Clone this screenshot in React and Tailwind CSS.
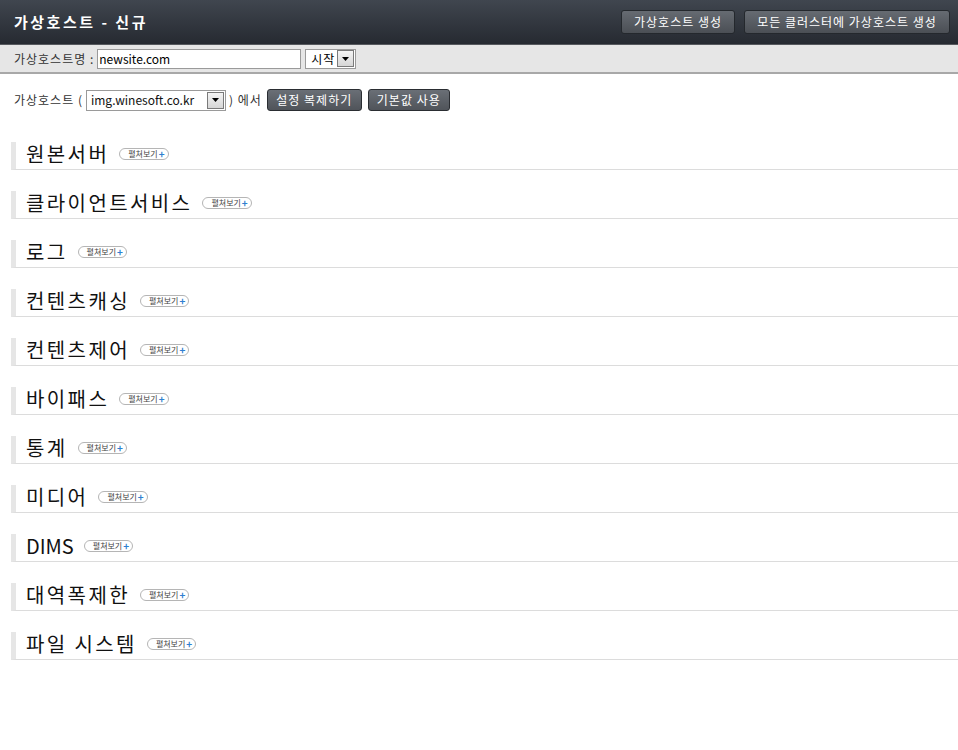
import React from "react";

const sections = [
  "원본서버",
  "클라이언트서비스",
  "로그",
  "컨텐츠캐싱",
  "컨텐츠제어",
  "바이패스",
  "통계",
  "미디어",
  "DIMS",
  "대역폭제한",
  "파일 시스템",
];

function Arrow() {
  return (
    <span className="flex h-[17px] w-[17px] items-center justify-center border border-[#7a7a7a] bg-gradient-to-b from-[#f4f4f4] to-[#d6d6d6]">
      <svg width="7" height="4" viewBox="0 0 7 4">
        <path d="M0 0h7L3.5 4z" fill="#000" />
      </svg>
    </span>
  );
}

function Badge() {
  return (
    <span className="ml-[10px] inline-flex h-[12px] items-center rounded-full border border-[#b5b5b5] bg-white pl-[8px] pr-[3px] text-[8px] leading-none tracking-[0px] text-[#444]">
      펼쳐보기<span className="ml-[1px] text-[10px] font-bold text-[#2f7fd0]">+</span>
    </span>
  );
}

export default function App() {
  return (
    <div
      className="min-h-[750px] w-[958px] bg-white text-[12px] text-[#333]"
      style={{ fontFamily: '"Noto Sans CJK KR", "Liberation Sans", sans-serif' }}
    >
      <div className="flex h-[45px] items-center justify-between border-b border-[#56595e] bg-gradient-to-b from-[#40464f] to-[#262a31] pl-[14px] pr-[8px]">
        <div className="text-[15px] font-bold tracking-[2.5px] text-white">가상호스트 - 신규</div>
        <div className="flex gap-[9px]">
          <button className="h-[24px] w-[114px] rounded-[3px] border border-[#24282d] bg-gradient-to-b from-[#666b72] to-[#4b4f55] text-[12px] tracking-[1px] text-white">
            가상호스트 생성
          </button>
          <button className="h-[24px] w-[206px] rounded-[3px] border border-[#24282d] bg-gradient-to-b from-[#666b72] to-[#4b4f55] text-[12px] tracking-[1px] text-white">
            모든 클러스터에 가상호스트 생성
          </button>
        </div>
      </div>

      <div className="flex h-[29px] items-center border-b-2 border-[#a8a8a8] bg-[#e6e6e6] pl-[14px]">
        <span className="text-[12px] tracking-[1px] text-[#333]">가상호스트명 :</span>
        <div className="ml-[3px] flex h-[20px] w-[204px] items-center border border-[#9a9a9a] bg-white pl-[1px] text-[12px] text-black">
          newsite.com
        </div>
        <div className="ml-[4px] flex h-[20px] w-[51px] items-center justify-between border border-[#9a9a9a] bg-white pl-[5px] pr-[1px] text-[12px] tracking-[1px] text-black">
          시작
          <Arrow />
        </div>
      </div>

      <div className="mt-[15px] flex items-center pl-[14px]">
        <span className="text-[12px] tracking-[1px] text-[#333]">가상호스트 (</span>
        <div className="ml-[3px] flex h-[21px] w-[140px] items-center justify-between border border-[#9a9a9a] bg-white pl-[4px] pr-[1px] text-[12px] text-[#111]">
          img.winesoft.co.kr
          <Arrow />
        </div>
        <span className="ml-[3px] text-[12px] tracking-[1px] text-[#333]">) 에서</span>
        <button className="ml-[5px] h-[22px] w-[95px] rounded-[3px] border border-[#2a2d32] bg-gradient-to-b from-[#6a6f76] to-[#50545a] text-[12px] tracking-[1px] text-white">
          설정 복제하기
        </button>
        <button className="ml-[6px] h-[22px] w-[82px] rounded-[3px] border border-[#2a2d32] bg-gradient-to-b from-[#6a6f76] to-[#50545a] text-[12px] tracking-[1px] text-white">
          기본값 사용
        </button>
      </div>

      <div className="mt-[31px] flex flex-col gap-[21px] pl-[11px]">
        {sections.map((s) => (
          <div
            key={s}
            className="flex h-[28px] items-center border-b border-l-[5px] border-b-[#dcdcdc] border-l-[#e6e6e6] pb-[3px] pl-[10px]"
          >
            <span
              className={
                s === "DIMS"
                  ? "text-[20px] leading-none text-[#111]"
                  : "text-[20px] leading-none tracking-[2.4px] text-[#111]"
              }
            >
              {s}
            </span>
            <Badge />
          </div>
        ))}
      </div>
    </div>
  );
}
